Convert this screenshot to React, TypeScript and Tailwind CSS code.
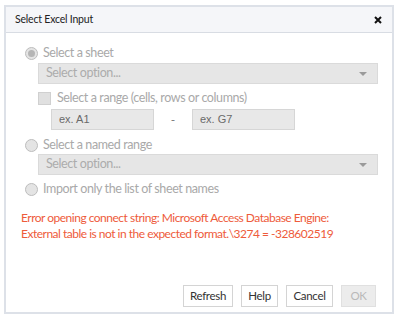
import React from 'react';

const Radio: React.FC<{ checked?: boolean; label: string }> = ({ checked, label }) => (
  <div className="flex items-center h-[18px]">
    <span className="w-[13px] h-[13px] rounded-full border border-[#bdbdbd] bg-[#e4e4e4] flex items-center justify-center">
      {checked && <span className="w-[7px] h-[7px] rounded-full bg-[#b5b5b5]" />}
    </span>
    <span className="ml-[5px] text-[12.5px] tracking-[-0.4px] text-[#a9a9a9]">{label}</span>
  </div>
);

const SelectBox: React.FC = () => (
  <div className="ml-[13px] mr-[14px] h-[21px] bg-[#e6e6e6] border border-[#dadada] flex items-center justify-between px-[7px]">
    <span className="text-[12.5px] tracking-[-0.4px] text-[#acacac]">Select option...</span>
    <svg width="8" height="4" viewBox="0 0 8 4" className="mr-[3px]">
      <path d="M0 0 H8 L4 4 Z" fill="#9a9a9a" />
    </svg>
  </div>
);

const Btn: React.FC<{ label: string; w: string; disabled?: boolean }> = ({ label, w, disabled }) => (
  <button
    className={`${w} h-[22px] border text-[11.5px] tracking-[-0.3px] ${
      disabled ? 'bg-[#ececec] border-[#e0e0e0] text-[#b9b9b9]' : 'bg-white border-[#d4d4d4] text-[#333]'
    }`}
  >
    {label}
  </button>
);

export default function App() {
  return (
    <div className="w-[400px] h-[320px] bg-white pt-[5px] pl-[4px]" style={{ fontFamily: 'Lato, "Noto Sans", sans-serif' }}>
      <div className="w-[390px] h-[309px] border-2 border-[#dde1e8] flex flex-col">
        {/* Title bar */}
        <div className="h-[26px] bg-[#f5f6f9] border-b border-[#d8dce3] flex items-center justify-between pl-[9px] pr-[10px]">
          <span className="text-[10.5px] tracking-[-0.2px] text-[#222]">Select Excel Input</span>
          <svg width="8" height="8" viewBox="0 0 8 8">
            <path d="M1 1 L7 7 M7 1 L1 7" stroke="#111" strokeWidth="2" />
          </svg>
        </div>

        <div className="flex-1 flex flex-col pt-[11px] pl-[19px]">
          <Radio checked label="Select a sheet" />
          <div className="mt-[1px]">
            <SelectBox />
          </div>
          <div className="flex items-center mt-[7px] ml-[13px] h-[14px]">
            <span className="w-[13px] h-[13px] bg-[#e0e0e0] border border-[#d0d0d0]" />
            <span className="ml-[6px] text-[12.5px] tracking-[-0.4px] text-[#a9a9a9]">Select a range (cells, rows or columns)</span>
          </div>
          <div className="flex items-center mt-[4px] ml-[26px]">
            <div className="w-[103px] h-[21px] bg-[#e8e8e8] border border-[#d6d6d6] flex items-center pl-[7px] text-[11px] text-[#6a6a6a]" style={{ fontFamily: '"Liberation Sans", Arial, sans-serif' }}>ex. A1</div>
            <span className="w-[38px] text-center text-[12px] text-[#777]">-</span>
            <div className="w-[103px] h-[21px] bg-[#e8e8e8] border border-[#d6d6d6] flex items-center pl-[7px] text-[11px] text-[#6a6a6a]" style={{ fontFamily: '"Liberation Sans", Arial, sans-serif' }}>ex. G7</div>
          </div>
          <div className="mt-[6px]">
            <Radio label="Select a named range" />
          </div>
          <div className="mt-0">
            <SelectBox />
          </div>
          <div className="mt-[5px]">
            <Radio label="Import only the list of sheet names" />
          </div>
          <div className="mt-[12px] -ml-[4px] text-[12px] tracking-[-0.5px] leading-[16px] text-[#ee5b3b]">
            <div>Error opening connect string: Microsoft Access Database Engine:</div>
            <div>External table is not in the expected format.\3274 = -328602519</div>
          </div>
        </div>

        <div className="flex justify-end gap-[8px] pr-[16px] pb-[5px]">
          <Btn label="Refresh" w="w-[50px]" />
          <Btn label="Help" w="w-[37px]" />
          <Btn label="Cancel" w="w-[47px]" />
          <Btn label="OK" w="w-[35px]" disabled />
        </div>
      </div>
    </div>
  );
}
